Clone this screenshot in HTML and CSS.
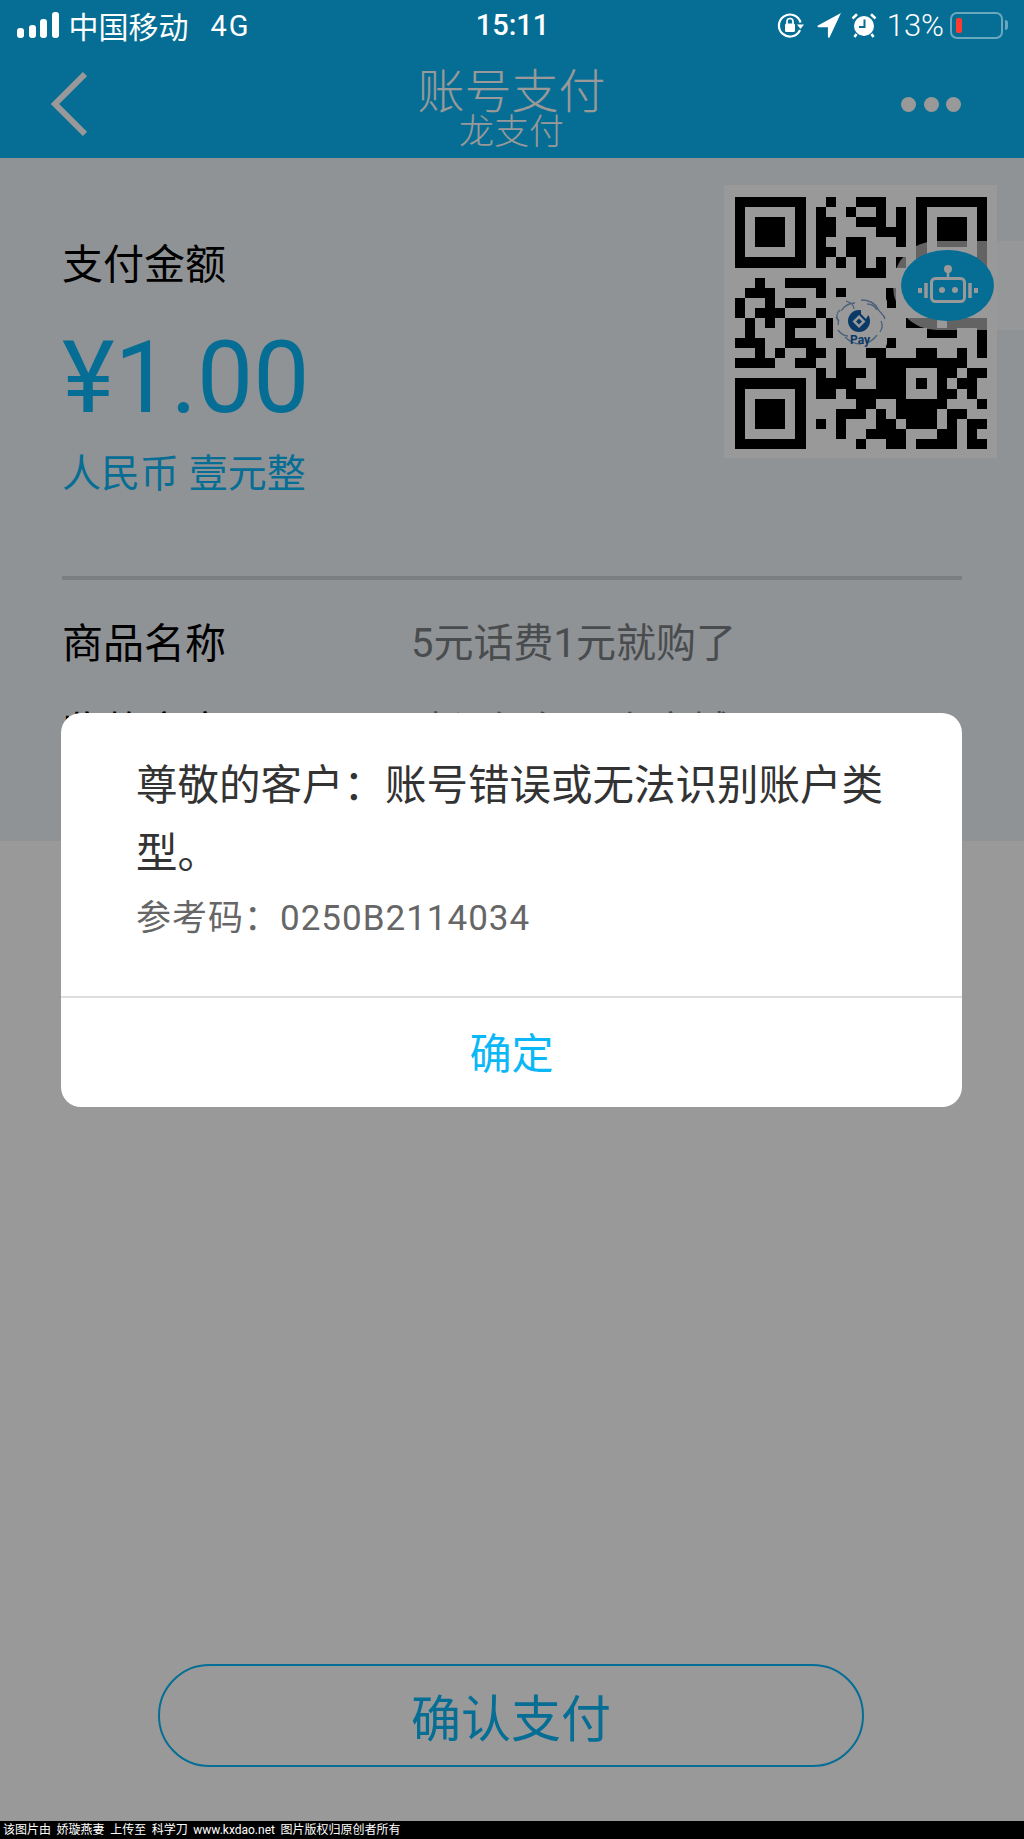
FILE: index.html
```html
<!DOCTYPE html>
<html lang="zh-CN">
<head>
    <meta charset="UTF-8">
    <meta name="viewport" content="width=device-width, initial-scale=1.0">
    <title>账号支付</title>
    <link rel="stylesheet" href="styles.css">
</head>
<body>
    <div class="screen">
        <!-- Status bar sits above the dialog mask -->
        <div class="status-bar">
            <div class="status-left">
                <div class="signal"><i class="s1"></i><i class="s2"></i><i class="s3"></i><i class="s4"></i></div>
                <span class="carrier">中国移动</span>
                <span class="network">4G</span>
            </div>
            <div class="status-time">15:11</div>
            <div class="status-right">
                <svg class="icon-lock" width="28" height="28" viewBox="0 0 28 28">
                    <path d="M24.5 11.5A11 11 0 1 0 24 19" fill="none" stroke="#fff" stroke-width="2.2"/>
                    <path d="M21 13.5h7l-3.5 4.5z" fill="#fff"/>
                    <rect x="9" y="12.5" width="10" height="8.5" rx="1.5" fill="#fff"/>
                    <path d="M11 13V10.5a3 3 0 0 1 6 0V13" fill="none" stroke="#fff" stroke-width="1.7"/>
                </svg>
                <svg class="icon-arrow" width="26" height="26" viewBox="0 0 24 24">
                    <path d="M23 1 1.8 12.4c-.9.5-.6 1.6.4 1.6h8.8v8.8c0 1 1.100 1.300 1.600.4z" fill="#fff"/>
                </svg>
                <svg class="icon-alarm" width="26" height="26" viewBox="0 0 26 26">
                    <circle cx="13" cy="14" r="10" fill="#fff"/>
                    <path d="M1.500 6.500 6 2.200M24.500 6.500 20 2.200M5.500 22 3.500 25M20.500 22l2 3" stroke="#fff" stroke-width="2.600" fill="none"/>
                    <path d="M13.500 7.500v7.500H8" stroke="#066e94" stroke-width="2" fill="none"/>
                </svg>
                <span class="battery-text">13%</span>
                <div class="battery"><i class="battery-level"></i></div>
                <i class="battery-nub"></i>
            </div>
        </div>

        <header class="nav">
            <svg class="nav-back" width="40" height="66" viewBox="0 0 40 66">
                <path d="M38 3 8 33l30 30" fill="none" stroke="#fff" stroke-width="6"/>
            </svg>
            <div class="nav-title">
                <div class="title-main">账号支付</div>
                <div class="title-sub">龙支付</div>
            </div>
            <div class="nav-more"><i></i><i></i><i></i></div>
        </header>

        <main class="summary">
            <div class="summary-top">
                <div class="amount-box">
                    <div class="amount-label">支付金额</div>
                    <div class="amount-value">¥1.00</div>
                    <div class="amount-words">人民币 壹元整</div>
                </div>
                <div class="qr-panel">
                    <!-- one stroked run per row of modules -->
                    <svg class="qr-code" width="252" height="252" viewBox="0 0 25 25" shape-rendering="crispEdges">
                        <path stroke="#000" stroke-width="1" fill="none" d="
                            M0 .5h7M9 .5h1M12 .5h3M18 .5h7
                            M0 1.500h1M6 1.500h1M8 1.500h1M11 1.500h1M14 1.500h1M16 1.500h1M18 1.500h1M24 1.500h1
                            M0 2.500h1M2 2.500h3M6 2.500h1M8 2.500h2M12 2.500h3M16 2.500h1M18 2.500h1M20 2.500h3M24 2.500h1
                            M0 3.500h1M2 3.500h3M6 3.500h1M8 3.500h2M14 3.500h3M18 3.500h1M20 3.500h3M24 3.500h1
                            M0 4.500h1M2 4.500h3M6 4.500h1M8 4.500h1M11 4.500h2M16 4.500h1M18 4.500h1M20 4.500h3M24 4.500h1
                            M0 5.500h1M6 5.500h1M8 5.500h2M11 5.500h2M18 5.500h1M24 5.500h1
                            M0 6.500h7M8 6.500h1M10 6.500h1M12 6.500h1M14 6.500h1M16 6.500h1M18 6.500h7
                            M12 7.500h3
                            M2 8.500h1M5 8.500h4
                            M1 9.500h3M8 9.500h1M10 9.500h1M15 9.500h1
                            M0 10.500h1M3 10.500h1M5 10.500h2M15 10.500h1
                            M0 11.500h1M2 11.500h3M8 11.500h1
                            M1 12.500h1M3 12.500h1M5 12.500h3M9 12.500h1M17 12.500h3M21 12.500h4
                            M1 13.500h1M5 13.500h1M9 13.500h1M19 13.500h3M24 13.500h1
                            M0 14.500h3M5 14.500h3M15 14.500h1M24 14.500h1
                            M2 15.500h1M4 15.500h1M7 15.500h2M10 15.500h1M13 15.500h2M18 15.500h2M22 15.500h1M24 15.500h1
                            M0 16.500h4M6 16.500h2M10 16.500h1M14 16.500h9
                            M8 17.500h1M10 17.500h3M14 17.500h3M20 17.500h2M23 17.500h2
                            M0 18.500h7M8 18.500h4M14 18.500h3M18 18.500h1M20 18.500h1M22 18.500h2
                            M0 19.500h1M6 19.500h1M8 19.500h2M11 19.500h6M20 19.500h2M23 19.500h1
                            M0 20.500h1M2 20.500h3M6 20.500h1M12 20.500h2M16 20.500h5M24 20.500h1
                            M0 21.500h1M2 21.500h3M6 21.500h1M10 21.500h3M14 21.500h1M16 21.500h4M21 21.500h2
                            M0 22.500h1M2 22.500h3M6 22.500h1M8 22.500h1M10 22.500h1M14 22.500h2M17 22.500h3M21 22.500h1M23 22.500h2
                            M0 23.500h1M6 23.500h1M10 23.500h1M13 23.500h4M20 23.500h2M23 23.500h1
                            M0 24.500h7M12 24.500h1M15 24.500h2M18 24.500h4M23 24.500h2"/>
                    </svg>
                    <div class="qr-logo">
                        <svg width="54" height="51" viewBox="0 0 54 51">
                            <g fill="none" stroke="#7fa3cc" stroke-width="1.300">
                                <path d="M8 14c4-6 10-8 14-8M13 4c6 2 8 5 8 8M6 24c-3-3-3-8 1-11M5 33c3 4 7 6 10 6"/>
                                <path d="M28 3c8 0 14 3 17 9 2 4 6 5 7 10M34 7c4 0 8 2 10 6M48 24c2 4 1 8-1 11M44 38c-3 4-7 7-11 8"/>
                                <path d="M12 40c4 4 10 7 16 7M3 20c2 2 3 5 2 8"/>
                            </g>
                            <circle cx="26" cy="24" r="11" fill="#1160ad"/>
                            <path d="M26 18l6.500 6.500-6.500 6.500-6.500-6.500z" fill="#fff"/>
                            <path d="M26 21.500l3 3-3 3-3-3z" fill="#1160ad"/>
                            <path d="M28 12l9 3-4 7-5-5z" fill="#fff"/>
                        </svg>
                        <span class="pay-text">Pay</span>
                    </div>
                </div>
            </div>
            <div class="summary-divider"></div>
            <div class="info-row">
                <span class="info-label">商品名称</span>
                <span class="info-value">5元话费1元就购了</span>
            </div>
            <div class="info-row info-row-next">
                <span class="info-label">收款商户</span>
                <span class="info-value">建设银行网上商城</span>
            </div>

            <!-- floating assistant button -->
            <div class="robot-dock">
                <div class="robot-btn">
                    <svg width="64" height="44" viewBox="0 0 64 44">
                        <circle cx="32" cy="5" r="4" fill="#fff"/>
                        <path d="M32 8v6" stroke="#fff" stroke-width="2.500"/>
                        <rect x="15.500" y="14.500" width="33" height="23" rx="4" fill="none" stroke="#fff" stroke-width="3"/>
                        <circle cx="26" cy="26" r="3" fill="#fff"/>
                        <circle cx="39" cy="26" r="3" fill="#fff"/>
                        <path d="M10 19v15M54 19v15" stroke="#fff" stroke-width="3.500"/>
                        <path d="M4 24v5M60 24v5" stroke="#fff" stroke-width="4"/>
                    </svg>
                </div>
            </div>
        </main>

        <section class="lower">
            <button class="confirm-btn" type="button">确认支付</button>
        </section>

        <div class="mask"></div>

        <div class="dialog">
            <div class="dialog-body">
                <p class="dialog-msg">尊敬的客户：账号错误或无法识别账户类型。</p>
                <p class="dialog-code">参考码：0250B2114034</p>
            </div>
            <div class="dialog-ok">确定</div>
        </div>
    </div>
    <footer class="credit">该图片由 娇璇燕妻 上传至 科学刀 www.kxdao.net 图片版权归原创者所有</footer>
</body>
</html>
```

FILE: styles.css
```css
* {
    box-sizing: border-box;
}
body {
    margin: 0;
    background: #000;
    font-family: Roboto, "Noto Sans CJK SC", sans-serif;
}
p {
    margin: 0;
}
.screen {
    position: relative;
    width: 1024px;
    height: 1821px;
    display: flex;
    flex-direction: column;
    overflow: hidden;
    background: #fff;
}

/* status bar */
.status-bar {
    position: absolute;
    top: 0;
    left: 0;
    right: 0;
    z-index: 3;
    height: 50px;
    padding: 0 16px 0 17px;
    display: grid;
    grid-template-columns: 1fr auto 1fr;
    align-items: center;
    color: #fff;
    font-size: 29px;
}
.status-left {
    display: flex;
    align-items: center;
}
.signal {
    display: flex;
    align-items: flex-end;
    gap: 4.5px;
    height: 26px;
    margin-right: 10px;
}
.signal i {
    width: 7px;
    background: #fff;
    border-radius: 3px;
}
.s1 { height: 10px; }
.s2 { height: 13px; }
.s3 { height: 19px; }
.s4 { height: 26px; }
.carrier {
    font-size: 30px;
}
.network {
    margin-left: 22px;
    margin-top: 2px;
    font-size: 29px;
    letter-spacing: 2px;
}
.status-time {
    font-size: 29px;
    font-weight: 500;
}
.status-right {
    display: flex;
    align-items: center;
    justify-content: flex-end;
}
.icon-arrow {
    margin-left: 12px;
}
.icon-alarm {
    margin-left: 9px;
}
.battery-text {
    margin-left: 10px;
    font-size: 31px;
    font-weight: 300;
}
.battery {
    width: 53px;
    height: 27px;
    margin-left: 6px;
    padding: 4px;
    border: 2px solid rgba(255, 255, 255, .4);
    border-radius: 7px;
}
.battery-level {
    display: block;
    width: 6px;
    height: 100%;
    background: #ff3b30;
    border-radius: 2px;
}
.battery-nub {
    width: 3px;
    height: 10px;
    margin-left: 2px;
    background: rgba(255, 255, 255, .4);
    border-radius: 0 3px 3px 0;
}

/* nav bar */
.nav {
    height: 158px;
    padding: 50px 63px 0 47px;
    display: flex;
    align-items: center;
    justify-content: space-between;
    background: #0ab7f7;
    color: #fff;
}
.nav-title {
    text-align: center;
    margin-left: 35px;
    margin-top: 14px;
}
.title-main {
    font-size: 47px;
    font-weight: 300;
    line-height: 44px;
}
.title-sub {
    font-size: 35px;
    font-weight: 300;
    line-height: 38px;
}
.nav-more {
    display: flex;
    gap: 7.5px;
}
.nav-more i {
    width: 15px;
    height: 15px;
    background: #fff;
    border-radius: 50%;
}

/* payment summary */
.summary {
    position: relative;
    height: 683px;
    padding: 27px 62px 0 62px;
    background: #f0f5fa;
}
.summary-top {
    display: flex;
    justify-content: space-between;
    align-items: flex-start;
    height: 309px;
}
.amount-label {
    margin-top: 55px;
    font-size: 41px;
    line-height: 50px;
    color: #000;
}
.amount-value {
    margin-top: 38px;
    font-size: 100px;
    line-height: 100px;
    color: #0ab7f7;
}
.amount-words {
    margin-top: 24px;
    font-size: 39px;
    line-height: 44px;
    color: #0ab7f7;
}
.qr-panel {
    position: relative;
    width: 273px;
    height: 273px;
    margin-right: -35px;
    padding: 12px 11px;
    background: #fff;
}
.qr-code {
    display: block;
}
.qr-logo {
    position: absolute;
    left: 109px;
    top: 112px;
    width: 54px;
    height: 51px;
    background: #fff;
    border-radius: 5px;
}
.qr-logo svg {
    display: block;
}
.pay-text {
    position: absolute;
    left: 0;
    right: 0;
    bottom: 1px;
    font-size: 12px;
    font-weight: 700;
    line-height: 13px;
    text-align: center;
    color: #1160ad;
    background: transparent;
}
.summary-divider {
    height: 4px;
    margin-top: 82px;
    background: #ced0d5;
}
.info-row {
    display: flex;
    margin-top: 39px;
    line-height: 50px;
}
.info-row-next {
    margin-top: 38px;
}
.info-label {
    width: 349px;
    font-size: 41px;
    color: #000;
}
.info-value {
    font-size: 40px;
    color: #7b7f82;
}
.robot-dock {
    position: absolute;
    right: 0;
    top: 83px;
    width: 131px;
    height: 89px;
    padding: 9px 0 0 8px;
    background: rgba(255, 255, 255, .65);
    border-radius: 44px 0 0 44px;
}
.robot-btn {
    width: 93px;
    height: 71px;
    display: flex;
    align-items: center;
    justify-content: center;
    background: #0ab7f7;
    border-radius: 46px / 36px;
}

/* lower area with the confirm button */
.lower {
    flex: 1;
    padding: 0 2px 54px 0;
    display: flex;
    align-items: flex-end;
    justify-content: center;
    background: #fff;
}
.confirm-btn {
    width: 706px;
    height: 103px;
    padding: 0 0 2px;
    font-family: inherit;
    font-size: 50px;
    color: #0ab7f7;
    background: transparent;
    border: 2.500px solid #0ab7f7;
    border-radius: 52px;
}

/* alert */
.mask {
    position: absolute;
    top: 0;
    left: 0;
    right: 0;
    bottom: 0;
    z-index: 1;
    background: rgba(0, 0, 0, .4);
}
.dialog {
    position: absolute;
    left: 61px;
    top: 713px;
    z-index: 2;
    width: 901px;
    height: 394px;
    display: flex;
    flex-direction: column;
    background: #fff;
    border-radius: 20px;
}
.dialog-body {
    flex: 1;
    padding: 39px 76px 0 75px;
}
.dialog-msg {
    font-size: 41.5px;
    line-height: 68px;
    color: #333;
}
.dialog-code {
    margin-top: 9px;
    font-size: 35px;
    line-height: 44px;
    letter-spacing: 1px;
    color: #666;
}
.dialog-ok {
    height: 111px;
    border-top: 2px solid #ddd;
    font-size: 42px;
    line-height: 113px;
    text-align: center;
    color: #0ab7f7;
}

.credit {
    height: 18px;
    padding-left: 3px;
    font-size: 12px;
    line-height: 18px;
    word-spacing: 2.6px;
    color: #fff;
    background: #000;
    white-space: nowrap;
}
```
